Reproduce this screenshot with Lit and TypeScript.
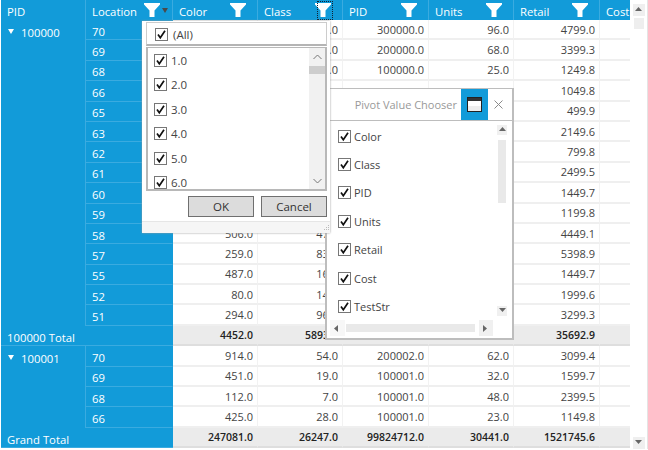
import { LitElement, html, css, svg } from 'lit';
import { customElement } from 'lit/decorators.js';

const FONT = css`'Open Sans', 'Noto Sans', sans-serif`;

const funnel = svg`<path d="M0 0H16V1.5L10.5 7.5V14H5.5V7.5L0 1.5Z" fill="#fff"/>`;

const check = html`<svg class="check" width="13" height="13" viewBox="0 0 13 13">
    <rect x="0.5" y="0.5" width="12" height="12" fill="#fff" stroke="#777"/>
    <path d="M3 6.5L5.3 9.8L10 2.8" fill="none" stroke="#111" stroke-width="1.7"/>
</svg>`;

const arrow = (dir: string, color = '#666') => {
    const d: Record<string, string> = { up: 'M0 4L3.5 0L7 4Z', down: 'M0 0L7 0L3.5 4Z', left: 'M4 0V7L0 3.5Z', right: 'M0 0V7L4 3.5Z' };
    return html`<svg width="7" height="7" viewBox="0 0 7 7"><path d=${d[dir]} fill=${color}/></svg>`;
};

const chevron = (d: string) => html`<svg width="9" height="6" viewBox="0 0 9 6"><path d=${d} fill="none" stroke="#777" stroke-width="1"/></svg>`;

type Row = { loc: string; v: string[] };

// blank cells sit fully under the two popups
const GROUP_A: Row[] = [
    { loc: '70', v: ['', '61.0', '300000.0', '96.0', '4799.0'] },
    { loc: '69', v: ['', '25.0', '200000.0', '68.0', '3399.3'] },
    { loc: '68', v: ['', '33.0', '100000.0', '25.0', '1249.8'] },
    { loc: '66', v: ['', '', '', '', '1049.8'] },
    { loc: '65', v: ['', '', '', '', '499.9'] },
    { loc: '63', v: ['', '', '', '', '2149.6'] },
    { loc: '62', v: ['', '', '', '', '799.8'] },
    { loc: '61', v: ['', '', '', '', '2499.5'] },
    { loc: '60', v: ['', '', '', '', '1449.7'] },
    { loc: '59', v: ['', '', '', '', '1199.8'] },
    { loc: '58', v: ['506.0', '47.0', '', '', '4449.1'] },
    { loc: '57', v: ['259.0', '83.0', '', '', '5398.9'] },
    { loc: '55', v: ['487.0', '16.0', '', '', '1449.7'] },
    { loc: '52', v: ['80.0', '14.0', '', '', '1999.6'] },
    { loc: '51', v: ['294.0', '96.0', '', '', '3299.3'] },
];

const GROUP_B: Row[] = [
    { loc: '70', v: ['914.0', '54.0', '200002.0', '62.0', '3099.4'] },
    { loc: '69', v: ['451.0', '19.0', '100001.0', '32.0', '1599.7'] },
    { loc: '68', v: ['112.0', '7.0', '100001.0', '48.0', '2399.5'] },
    { loc: '66', v: ['425.0', '28.0', '100001.0', '23.0', '1149.8'] },
];

const HEADERS = [
    { label: 'Location', open: true },
    { label: 'Color' },
    { label: 'Class', focus: true },
    { label: 'PID' },
    { label: 'Units' },
    { label: 'Retail' },
];

@customElement('filter-popup')
export class FilterPopup extends LitElement {
    static styles = css`
        :host {
            position: absolute;
            left: 142px;
            top: 21px;
            width: 188px;
            height: 212px;
            background: #fff;
            display: flex;
            flex-direction: column;
            font: 11.5px ${FONT};
            color: #444;
            box-shadow: 0 0 2px #999;
        }
        .all {
            margin: 1px 3px 0 4px;
            height: 24px;
            border: 1px solid #ccc;
            border-bottom: 2px solid #b4b4b4;
            box-sizing: border-box;
            display: flex;
            align-items: center;
            gap: 5px;
            padding: 2px 0 0 8px;
            font-size: 11.5px;
        }
        .list {
            margin: 1px 3px 0 4px;
            height: 144px;
            border: 2px solid #b8b8b8;
            border-top-width: 1px;
            box-sizing: border-box;
            display: flex;
            overflow: hidden;
        }
        .items {
            flex: 1;
            padding: 0 0 0 6px;
        }
        .item {
            height: 24.5px;
            display: flex;
            align-items: center;
            gap: 4px;
        }
        .bar {
            width: 16px;
            background: #f1f1f1;
            display: flex;
            flex-direction: column;
            align-items: center;
        }
        .bar .btn {
            height: 17px;
            display: flex;
            align-items: center;
            justify-content: center;
        }
        .thumb {
            width: 100%;
            height: 8px;
            background: #cdcdcd;
            margin-top: 1px;
        }
        .space { flex: 1; }
        .actions {
            height: 30px;
            display: flex;
            justify-content: flex-end;
            align-items: center;
            gap: 7px;
            padding: 0 3px 0 0;
        }
        button {
            width: 66px;
            height: 21px;
            padding: 0;
            background: #dcdcdc;
            border: 1px solid #6f6f6f;
            font: 11.5px ${FONT};
            color: #333;
        }
        .foot {
            flex: 1;
            background: #f6f6f6;
            border-top: 1px solid #e6e6e6;
            display: flex;
            justify-content: flex-end;
            align-items: flex-end;
        }
    `;

    render() {
        return html`
            <div class="all">${check}<span>(All)</span></div>
            <div class="list">
                <div class="items">
                    ${['1.0', '2.0', '3.0', '4.0', '5.0', '6.0'].map(v => html`<div class="item">${check}<span>${v}</span></div>`)}
                </div>
                <div class="bar">
                    <div class="btn">${chevron('M0.5 5L4.5 1L8.5 5')}</div>
                    <div class="thumb"></div>
                    <div class="space"></div>
                    <div class="btn">${chevron('M0.5 1L4.5 5L8.5 1')}</div>
                </div>
            </div>
            <div class="actions"><button>OK</button><button>Cancel</button></div>
            <div class="foot">
                <svg width="8" height="8" viewBox="0 0 8 8" fill="#bbb">
                    <rect x="6" y="0" width="1" height="1"/><rect x="4" y="2" width="1" height="1"/><rect x="6" y="2" width="1" height="1"/>
                    <rect x="2" y="4" width="1" height="1"/><rect x="4" y="4" width="1" height="1"/><rect x="6" y="4" width="1" height="1"/>
                </svg>
            </div>
        `;
    }
}

@customElement('value-chooser')
export class ValueChooser extends LitElement {
    static styles = css`
        :host {
            position: absolute;
            left: 325px;
            top: 88px;
            width: 189px;
            height: 252px;
            box-sizing: border-box;
            background: #fff;
            border: 2px solid #bdbdbd;
            border-top-width: 1px;
            display: flex;
            flex-direction: column;
            font: 11px ${FONT};
            color: #444;
        }
        .head {
            height: 32px;
            flex: none;
            border-bottom: 1px solid #bdbdbd;
            box-sizing: border-box;
            display: flex;
            align-items: stretch;
            justify-content: flex-end;
            padding-right: 24px;
            position: relative;
        }
        .title {
            color: #999;
            font-size: 11px;
            display: flex;
            align-items: center;
            margin-right: 4px;
        }
        .dock {
            width: 27px;
            background: #129bd9;
            display: flex;
            align-items: center;
            justify-content: center;
        }
        .close {
            position: absolute;
            right: 9px;
            top: 11px;
            width: 9px;
            height: 9px;
        }
        .body {
            flex: 1;
            display: flex;
            min-height: 0;
        }
        .items {
            flex: 1;
            padding: 1px 0 0 11px;
        }
        .item {
            height: 28.4px;
            display: flex;
            align-items: center;
            gap: 3px;
        }
        .vbar {
            width: 10px;
            margin: 4px 5px 4px 0;
            display: flex;
            flex-direction: column;
            align-items: center;
        }
        .arrow {
            width: 10px;
            height: 10px;
            background: #f0f0f0;
            display: flex;
            align-items: center;
            justify-content: center;
        }
        .vthumb {
            width: 8px;
            height: 63px;
            margin-top: 5px;
            background: #e9e9e9;
        }
        .space { flex: 1; }
        .hbar {
            height: 16px;
            margin: 0 19px 2px 3px;
            flex: none;
            display: flex;
            align-items: center;
        }
        .hbar .arrow {
            width: 14px;
            height: 16px;
        }
        .hbar .arrow.plain { width: 15px; background: #f7f7f7; }
        .hthumb {
            width: 129px;
            height: 8px;
            margin: 0 4px 0 1px;
            background: #e9e9e9;
        }
    `;

    render() {
        return html`
            <div class="head">
                <span class="title">Pivot Value Chooser</span>
                <div class="dock">
                    <svg width="15" height="15" viewBox="0 0 15 15">
                        <rect x="0.5" y="0.5" width="14" height="14" fill="#eee" stroke="#222"/>
                        <rect x="1" y="1" width="13" height="3" fill="#333"/>
                        <rect x="1" y="4" width="13" height="5" fill="#fff"/>
                    </svg>
                </div>
                <svg class="close" viewBox="0 0 9 9"><path d="M0.5 0.5L8.5 8.5M8.5 0.5L0.5 8.5" stroke="#8a8a8a" fill="none"/></svg>
            </div>
            <div class="body">
                <div class="items">
                    ${['Color', 'Class', 'PID', 'Units', 'Retail', 'Cost', 'TestStr'].map(v => html`<div class="item">${check}<span>${v}</span></div>`)}
                </div>
                <div class="vbar">
                    <div class="arrow">${arrow('up')}</div>
                    <div class="vthumb"></div>
                    <div class="space"></div>
                    <div class="arrow">${arrow('down')}</div>
                </div>
            </div>
            <div class="hbar">
                <div class="arrow plain">${arrow('left')}</div>
                <div class="hthumb"></div>
                <div class="arrow">${arrow('right')}</div>
            </div>
        `;
    }
}

@customElement('app-root')
export class AppRoot extends LitElement {
    static styles = css`
        :host {
            display: block;
            position: relative;
            width: 648px;
            height: 450px;
            overflow: hidden;
            background: #fff;
            font: 11px ${FONT};
            color: #444;
        }
        .page {
            display: flex;
            height: 449px;
            padding-left: 1px;
        }
        .grid {
            width: 629px;
            overflow: hidden;
            display: grid;
            grid-template-columns: 85px 87px 85px 85px 86px 85px 86px 85px;
            grid-template-rows: 20px repeat(21, 20.4px);
            align-content: start;
        }
        .hd {
            background: #129bd9;
            color: #fff;
            font-size: 11.3px;
            display: flex;
            align-items: center;
            justify-content: space-between;
            padding: 3px 11px 0 6px;
            border-right: 1px solid #3aabe0;
            box-sizing: border-box;
            position: relative;
            overflow: hidden;
            white-space: nowrap;
        }
        .hd svg { flex: none; margin-top: -3px; }
        .hd.open { padding-right: 12px; }
        .ring {
            position: absolute;
            right: 9px;
            top: 1px;
            width: 16px;
            height: 19px;
            box-sizing: border-box;
            border: 1px dotted #123;
        }
        .drop {
            position: absolute;
            right: 4px;
            top: 8px;
            width: 0;
            height: 0;
            border: 3px solid transparent;
            border-top: 5px solid #4a4a4a;
        }
        .pid {
            background: #129bd9;
            color: #fff;
            font-size: 11.3px;
            padding: 5px 0 0 7px;
            display: flex;
            gap: 7px;
            border-right: 1px solid #3aabe0;
            box-sizing: border-box;
        }
        .pid .tri {
            width: 0;
            height: 0;
            margin-top: 4px;
            border: 3px solid transparent;
            border-top: 5px solid #fff;
        }
        .span15 { grid-row: span 15; }
        .span4 { grid-row: span 4; }
        .loc {
            background: #129bd9;
            color: #fff;
            font-size: 11.3px;
            padding: 3px 0 0 6px;
            display: flex;
            align-items: center;
            border-bottom: 1px solid #3aabe0;
            border-right: 1px solid #129bd9;
            box-sizing: border-box;
        }
        .cell {
            display: flex;
            align-items: center;
            justify-content: flex-end;
            padding-right: 4px;
            border-right: 1px solid #f2f2f2;
            border-bottom: 2px solid #efefef;
            box-sizing: border-box;
        }
        .total-label {
            grid-column: span 2;
            background: #129bd9;
            color: #fff;
            font-size: 11.3px;
            padding: 4px 0 0 6px;
            display: flex;
            align-items: center;
            border-bottom: 1px solid #3aabe0;
            box-sizing: border-box;
        }
        .cell.total {
            background: #ebebeb;
            color: #222;
            font-size: 10.5px;
            font-weight: 600;
            border-right-color: #ebebeb;
            border-bottom-color: #dedede;
        }
        .scroll {
            width: 18px;
            display: flex;
            flex-direction: column;
            align-items: center;
            border-right: 1px solid #e4e4e4;
            box-sizing: border-box;
        }
        .scroll .btn {
            width: 12px;
            height: 12px;
            margin-top: 4px;
            background: #efefef;
            display: flex;
            align-items: center;
            justify-content: center;
        }
        .scroll .thumb {
            width: 10px;
            height: 11px;
            margin-top: 2px;
            background: #eeeeee;
        }
        .scroll .space { flex: 1; }
    `;

    private rows(list: Row[]) {
        return list.map(r => html`
            <div class="loc">${r.loc}</div>
            ${r.v.map(v => html`<div class="cell">${v}</div>`)}
            <div class="cell"></div>
        `);
    }

    private total(label: string, vals: string[]) {
        return html`
            <div class="total-label">${label}</div>
            ${vals.map(v => html`<div class="cell total">${v}</div>`)}
            <div class="cell total"></div>
        `;
    }

    render() {
        return html`
            <div class="page">
                <div class="grid">
                    <div class="hd">PID</div>
                    ${HEADERS.map(h => html`
                        <div class="hd ${h.open ? 'open' : ''}">
                            <span>${h.label}</span>
                            <svg width="16" height="14" viewBox="0 0 16 14">${funnel}</svg>
                            ${h.open ? html`<div class="drop"></div>` : ''}
                            ${h.focus ? html`<div class="ring"></div>` : ''}
                        </div>
                    `)}
                    <div class="hd">Cost</div>

                    <div class="pid span15"><span class="tri"></span><span>100000</span></div>
                    ${this.rows(GROUP_A)}
                    ${this.total('100000 Total', ['4452.0', '5893.0', '', '', '35692.9'])}

                    <div class="pid span4"><span class="tri"></span><span>100001</span></div>
                    ${this.rows(GROUP_B)}
                    ${this.total('Grand Total', ['247081.0', '26247.0', '99824712.0', '30441.0', '1521745.6'])}
                </div>
                <div class="scroll">
                    <div class="btn">${arrow('up')}</div>
                    <div class="thumb"></div>
                    <div class="space"></div>
                    <div class="btn">${arrow('down')}</div>
                </div>
            </div>
            <value-chooser></value-chooser>
            <filter-popup></filter-popup>
        `;
    }
}
